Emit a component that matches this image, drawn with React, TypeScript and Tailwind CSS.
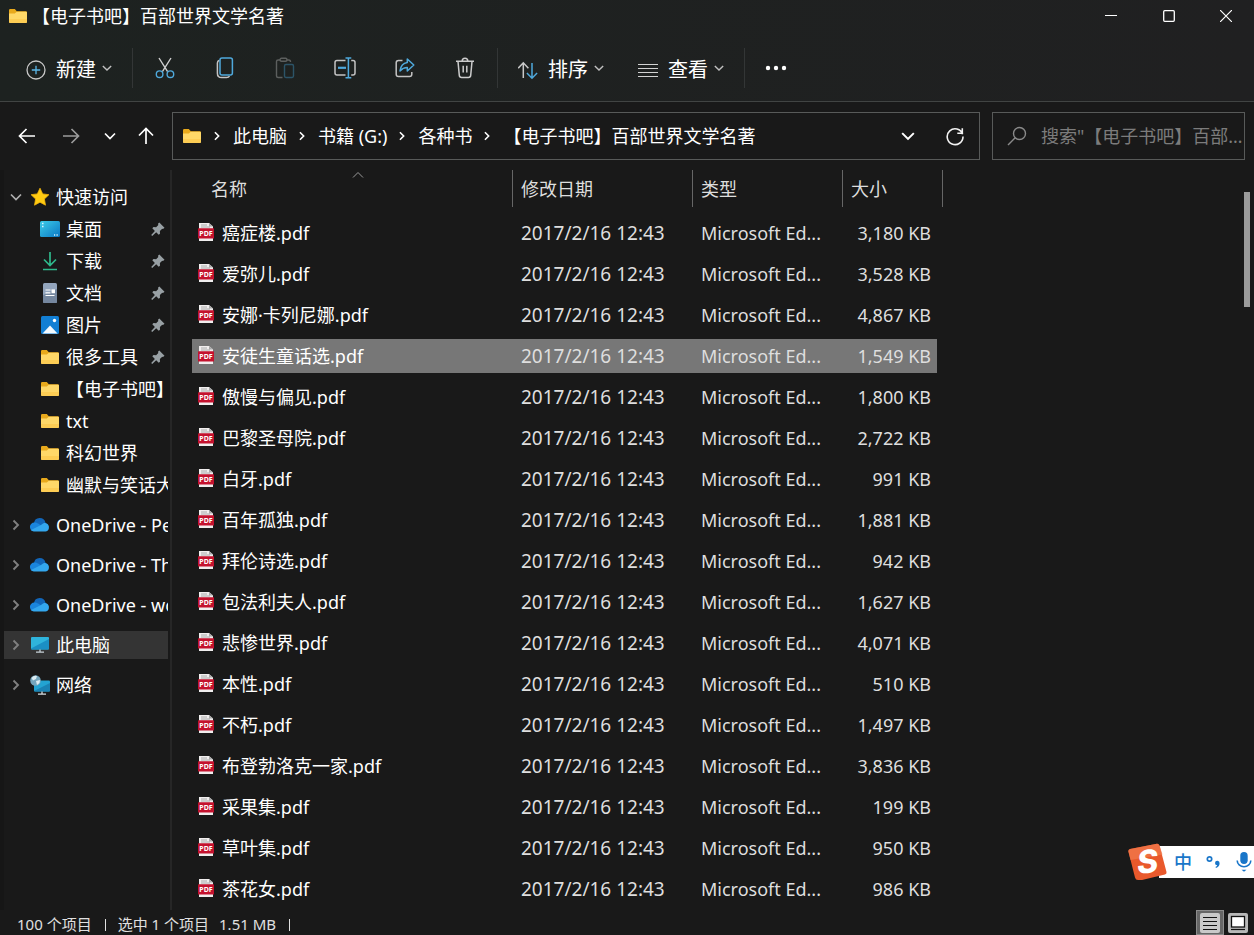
import type { ComponentType, ReactNode } from 'react';

type IconProps = { className?: string };

interface Book {
  name: string;
  size: string;
}

const MODIFIED = '2017/2/16 12:43';
const FILE_TYPE = 'Microsoft Ed...';

const books: Book[] = [
  { name: '癌症楼.pdf', size: '3,180 KB' },
  { name: '爱弥儿.pdf', size: '3,528 KB' },
  { name: '安娜·卡列尼娜.pdf', size: '4,867 KB' },
  { name: '安徒生童话选.pdf', size: '1,549 KB' },
  { name: '傲慢与偏见.pdf', size: '1,800 KB' },
  { name: '巴黎圣母院.pdf', size: '2,722 KB' },
  { name: '白牙.pdf', size: '991 KB' },
  { name: '百年孤独.pdf', size: '1,881 KB' },
  { name: '拜伦诗选.pdf', size: '942 KB' },
  { name: '包法利夫人.pdf', size: '1,627 KB' },
  { name: '悲惨世界.pdf', size: '4,071 KB' },
  { name: '本性.pdf', size: '510 KB' },
  { name: '不朽.pdf', size: '1,497 KB' },
  { name: '布登勃洛克一家.pdf', size: '3,836 KB' },
  { name: '采果集.pdf', size: '199 KB' },
  { name: '草叶集.pdf', size: '950 KB' },
  { name: '茶花女.pdf', size: '986 KB' },
];

/* ---------- icons ---------- */

function FolderIcon({ className = 'h-5 w-5' }: IconProps) {
  return (
    <svg viewBox="0 0 20 20" className={className} aria-hidden="true">
      <path d="M1 4.2Q1 3 2.2 3h4.6l2 2.2h9Q19 5.2 19 6.4V10H1z" fill="#e8a91c" />
      <path d="M1 7.4h5.8l2-1.6h9.2q1 0 1 1V16q0 1-1 1H2q-1 0-1-1z" fill="#ffd868" />
      <path d="M1 13h18v3q0 1-1 1H2q-1 0-1-1z" fill="#fbc748" opacity=".6" />
    </svg>
  );
}

function ChevronIcon({ className = 'h-3 w-3' }: IconProps) {
  return (
    <svg viewBox="0 0 12 12" className={className} fill="none" stroke="currentColor" aria-hidden="true">
      <path d="M1 3.5l5 5 5-5" strokeWidth="1.7" />
    </svg>
  );
}

function ChevronRightIcon({ className = 'h-3 w-2' }: IconProps) {
  return (
    <svg viewBox="0 0 8 12" className={className} fill="none" stroke="currentColor" aria-hidden="true">
      <path d="M1.5 1.5L6 6l-4.5 4.500" strokeWidth="1.900" />
    </svg>
  );
}

function NewIcon() {
  return (
    <svg viewBox="0 0 20 20" className="h-5 w-5" fill="none" aria-hidden="true">
      <circle cx="10" cy="10" r="9" stroke="#c8c8c8" strokeWidth="1.3" />
      <path d="M10 5.8v8.4M5.8 10h8.4" stroke="#5cb8e8" strokeWidth="1.3" />
    </svg>
  );
}

function CutIcon() {
  return (
    <svg viewBox="0 0 22 22" className="h-[22px] w-[22px]" fill="none" strokeWidth="1.4" aria-hidden="true">
      <path d="M5 1l8.6 13.6M17 1L8.4 14.6" stroke="#cfcfcf" />
      <circle cx="5.6" cy="17.2" r="3.3" stroke="#4fa9dc" />
      <circle cx="16.4" cy="17.2" r="3.3" stroke="#4fa9dc" />
    </svg>
  );
}

function CopyIcon() {
  return (
    <svg viewBox="0 0 22 22" className="h-[22px] w-[22px]" fill="none" strokeWidth="1.5" aria-hidden="true">
      <path d="M5.5 3.2C4 3.6 3.4 4.4 3.4 6v10.2c0 3 1.4 4.4 4.2 4.4h5c1.4 0 2.3-.4 2.9-1.4" stroke="#c4c4c4" />
      <rect x="6" y="1" width="12.4" height="17" rx="2" stroke="#4fa9dc" />
    </svg>
  );
}

function PasteIcon() {
  return (
    <svg viewBox="0 0 22 22" className="h-[22px] w-[22px]" fill="none" strokeWidth="1.4" aria-hidden="true">
      <path d="M8.5 20.5H4.2Q2.5 20.5 2.5 19V4.5Q2.5 3 4.2 3H6M12.5 3h2.3Q16.5 3 16.5 5" stroke="#5c5f5e" />
      <rect x="6" y="1.2" width="7" height="3" rx="1.5" stroke="#5c5f5e" />
      <rect x="10.5" y="7.5" width="9" height="13" rx="1.4" stroke="#2c5468" />
    </svg>
  );
}

function RenameIcon() {
  return (
    <svg viewBox="0 0 22 22" className="h-[22px] w-[22px]" fill="none" strokeWidth="1.5" aria-hidden="true">
      <path d="M11.5 3.5H3Q1 3.5 1 5.5v10.5q0 2 2 2h8.5M17.200 3.5H19q2 0 2 2v10.5q0 2-2 2h-1.8" stroke="#c4c4c4" />
      <path d="M11.5 1h5.8M11.5 20.8h5.8M14.4 1v19.8" stroke="#4fa9dc" />
      <path d="M4 10.8h8" stroke="#4fa9dc" strokeWidth="2.200" />
    </svg>
  );
}

function ShareIcon() {
  return (
    <svg viewBox="0 0 22 22" className="h-[22px] w-[22px]" fill="none" strokeWidth="1.5" aria-hidden="true">
      <path d="M8.5 3.5H4.5q-2.3 0-2.3 2.3v11.4q0 2.3 2.3 2.3h11q2.3 0 2.3-2.3v-2.2" stroke="#c4c4c4" />
      <path d="M13.3 2l6.500 6-6.500 6v-3.400c-3.300 0-5.200 1-7.300 3.300.6-4.400 2.900-7.600 7.300-8.300z" stroke="#4fa9dc" strokeLinejoin="round" />
    </svg>
  );
}

function TrashIcon() {
  return (
    <svg viewBox="0 0 22 22" className="h-[22px] w-[22px]" fill="none" stroke="#cccccc" strokeWidth="1.5" aria-hidden="true">
      <path d="M2 4.2h18M8.2 4q0-2.8 2.8-2.8T13.8 4M4 4.500l1.300 13.900q.2 2.100 2.300 2.100h6.800q2.100 0 2.300-2.100L18 4.500M9.200 8.800v6.800M12.800 8.800v6.800" />
    </svg>
  );
}

function SortIcon() {
  return (
    <svg viewBox="1 0 20 20" className="h-5 w-5" fill="none" strokeWidth="1.5" aria-hidden="true">
      <path d="M6.300 18V3M1.200 8.200l5.100-5.400 5.100 5.400" stroke="#c8c8c8" />
      <path d="M15 3v15M9.900 13l5.100 5.200 5.100-5.200" stroke="#4fa9dc" />
    </svg>
  );
}

function ViewIcon() {
  return (
    <svg viewBox="0 0 20 20" className="h-5 w-5" stroke="#d2d2d2" strokeWidth="1.2" aria-hidden="true">
      <path d="M0 4.500h20M0 8.500h20M0 12.500h20M0 16.500h20" />
    </svg>
  );
}

function MoreIcon() {
  return (
    <svg viewBox="0 0 22 6" className="h-1.5 w-[22px]" fill="#ffffff" aria-hidden="true">
      <circle cx="3" cy="3" r="2.200" />
      <circle cx="11" cy="3" r="2.200" />
      <circle cx="19" cy="3" r="2.200" />
    </svg>
  );
}

function ArrowIcon({ className = '' }: IconProps) {
  return (
    <svg viewBox="0 0 18 18" className={`h-[18px] w-[18px] ${className}`} fill="none" stroke="currentColor" strokeWidth="1.7" aria-hidden="true">
      <path d="M17 9H1.500M8.500 2L1.500 9l7 7" />
    </svg>
  );
}

function RefreshIcon() {
  return (
    <svg viewBox="0 0 20 20" className="h-5 w-5" fill="none" stroke="#f2f2f2" strokeWidth="1.6" aria-hidden="true">
      <path d="M17.600 8.200A7.900 7.900 0 1 0 18 10.500M17.300 2.200v5h-5" />
    </svg>
  );
}

function SearchIcon() {
  return (
    <svg viewBox="0 0 20 20" className="h-5 w-5 shrink-0" fill="none" stroke="#8a8a8a" strokeWidth="1.4" aria-hidden="true">
      <circle cx="12.5" cy="7.5" r="6" />
      <path d="M8.2 11.800L1 19" />
    </svg>
  );
}

function StarIcon() {
  return (
    <svg viewBox="0 0 20 20" className="h-5 w-5" aria-hidden="true">
      <path d="M10 1.200l2.700 5.700 6.200.8-4.500 4.300 1.100 6.200L10 15.200l-5.500 3 1.100-6.200L1.100 7.700l6.200-.8z" fill="#ffcb12" stroke="#f5b50a" strokeWidth=".8" strokeLinejoin="round" />
    </svg>
  );
}

function DesktopIcon() {
  return (
    <svg viewBox="0 0 20 20" className="h-5 w-5" aria-hidden="true">
      <defs>
        <linearGradient id="desk" x1="0" y1="0" x2="1" y2="1">
          <stop offset="0" stopColor="#3ccbe8" />
          <stop offset="1" stopColor="#0b78c4" />
        </linearGradient>
      </defs>
      <rect x="0" y="2" width="20" height="16" rx="1.5" fill="url(#desk)" />
      <path d="M2 4.500h1.500M2 7.500h1.500M14 16h1.200M16.500 16h1.200" stroke="#d8f4ff" strokeWidth="1.3" />
    </svg>
  );
}

function DownloadIcon() {
  return (
    <svg viewBox="0 0 20 20" className="h-5 w-5" fill="none" stroke="#2fb98c" strokeWidth="1.7" aria-hidden="true">
      <path d="M10 1v13M4 8.500l6 6 6-6M3 18.500h14" />
    </svg>
  );
}

function DocumentIcon() {
  return (
    <svg viewBox="0 0 20 20" className="h-5 w-5" aria-hidden="true">
      <rect x="3" y="0" width="14" height="20" rx="1.5" fill="#93a5bd" />
      <path d="M3 12l14-6v12.500q0 1.500-1.500 1.500h-11Q3 20 3 18.500z" fill="#75879f" />
      <path d="M5.500 7h5M5.500 9.800h5M5.500 12.500h9" stroke="#fff" strokeWidth="1.2" />
      <rect x="11.5" y="6.400" width="3.500" height="3.800" fill="#fff" />
    </svg>
  );
}

function PictureIcon() {
  return (
    <svg viewBox="0 0 20 20" className="h-5 w-5" aria-hidden="true">
      <rect x="1" y="1" width="18" height="18" rx="1.5" fill="#127fd4" />
      <path d="M2.500 18.500L10 10.500l7.500 8z" fill="#f4faff" />
      <circle cx="14.5" cy="5.500" r="1.700" fill="#fff" />
    </svg>
  );
}

function CloudIcon() {
  return (
    <svg viewBox="0 0 20 20" className="h-5 w-5" aria-hidden="true">
      <path d="M4 8A5.800 5.800 0 0 1 15.400 7.500L19 12l-8 3H4.500A4 4 0 0 1 4 8z" fill="#1266b8" />
      <path d="M0 12.500A4.500 4.500 0 0 1 4.600 7.400c1.400 0 2.500.5 3.600 1.200l7 5-5 2.500H4.300Q.5 16.500 0 12.500z" fill="#1a85dc" />
      <path d="M1 15l10-5c1.300-1.500 2.700-2.100 4.100-2.100a4.400 4.400 0 0 1 .6 8.600H4.300Q2 16.300 1 15z" fill="#33a7ee" />
    </svg>
  );
}

function ComputerIcon() {
  return (
    <svg viewBox="0 0 20 20" className="h-5 w-5" aria-hidden="true">
      <rect x="1" y="2" width="18" height="12.500" rx="1" fill="#2fb4dc" />
      <path d="M1 13.500L19 4v9.500q0 1-1 1H2q-1 0-1-1z" fill="#1b8fc4" />
      <path d="M10 14.500V17M6 17.200h8" stroke="#c5d0d6" strokeWidth="1.3" />
    </svg>
  );
}

function NetworkIcon() {
  return (
    <svg viewBox="0 0 20 20" className="h-5 w-5" aria-hidden="true">
      <rect x="4" y="5.500" width="16" height="11" rx="1" fill="#23a3d2" />
      <path d="M4 16L20 8v7.500q0 1-1 1H5z" fill="#1a82b4" />
      <path d="M12 16.500V19M8 19.200h8" stroke="#d5dde2" strokeWidth="1.3" />
      <circle cx="5.500" cy="5.500" r="5.300" fill="#74a5bd" />
      <path d="M1.500 3Q4 0 7 1l-1 3-3 1.500zM6 6l4-1-.5 3-2.500 2z" fill="#dcecf2" />
    </svg>
  );
}

function PinIcon() {
  return (
    <svg viewBox="0 0 14 14" className="h-3.5 w-3.5 shrink-0" fill="#98a0a4" aria-hidden="true">
      <path d="M8.300.5l5.200 5.200-1.500 1.200-.8-.2-2.300 2.300.1 2.700-1.300 1L5.200 10.200 1.200 14 .2 13l3.700-4L1.300 6.300l1.200-1.200 2.600.2L7.300 3l-.3-1.300z" />
    </svg>
  );
}

function PdfIcon() {
  return (
    <svg viewBox="0 0 16 20" className="h-5 w-4 shrink-0" aria-hidden="true">
      <path d="M1 0h10l4 3.500V18H1z" fill="#f1eeee" />
      <path d="M11 0v3.500h4z" fill="#a9a9a9" />
      <path d="M3 2h6M3 4h9" stroke="#9a9a9a" strokeWidth=".8" />
      <rect x="0" y="5.200" width="16" height="10.300" rx=".6" fill="#c4122e" />
      <text x="8" y="13" textAnchor="middle" fontSize="7" fontWeight="700" fontFamily="Noto Sans, sans-serif" fill="#fff">
        PDF
      </text>
    </svg>
  );
}

/* ---------- title bar and commands ---------- */

function TitleBar() {
  return (
    <header className="flex h-8 items-center pl-2">
      <FolderIcon />
      <h1 className="grow pl-1 text-lg leading-8">【电子书吧】百部世界文学名著</h1>
      <button aria-label="最小化" className="flex h-8 w-[58px] items-center justify-center">
        <svg viewBox="0 0 12 12" className="h-3 w-3" stroke="#fff"><path d="M0 5.500h12" /></svg>
      </button>
      <button aria-label="最大化" className="flex h-8 w-[58px] items-center justify-center">
        <svg viewBox="0 0 12 12" className="h-3 w-3" fill="none" stroke="#fff" strokeWidth="1.3"><rect x=".7" y=".7" width="10.600" height="10.600" rx="1" /></svg>
      </button>
      <button aria-label="关闭" className="flex h-8 w-14 items-center justify-center">
        <svg viewBox="0 0 12 12" className="h-3 w-3" stroke="#fff" strokeWidth="1.2"><path d="M0 0l12 12M12 0L0 12" /></svg>
      </button>
    </header>
  );
}

function MenuButton({ icon, label }: { icon: ReactNode; label: string }) {
  return (
    <button className="flex h-10 items-center gap-1.5 text-xl">
      <span className="flex items-center gap-2.5 pt-1">
        {icon}
        <span>{label}</span>
      </span>
      <ChevronIcon className="h-2.5 w-2.5 text-[#c0c0c0]" />
    </button>
  );
}

function Separator() {
  return <div className="h-10 w-px bg-[#333636]" />;
}

const commands: { label: string; Icon: ComponentType }[] = [
  { label: '剪切', Icon: CutIcon },
  { label: '复制', Icon: CopyIcon },
  { label: '粘贴', Icon: PasteIcon },
  { label: '重命名', Icon: RenameIcon },
  { label: '共享', Icon: ShareIcon },
  { label: '删除', Icon: TrashIcon },
];

function CommandBar() {
  return (
    <div role="toolbar" className="flex h-[70px] items-center border-b border-[#414443] pt-[3px]">
      <div className="flex pr-5 pl-[26px]">
        <MenuButton icon={<NewIcon />} label="新建" />
      </div>
      <Separator />
      <div className="flex px-0.5">
        {commands.map(({ label, Icon }) => (
          <button key={label} aria-label={label} className="flex h-10 w-[60px] items-center justify-center">
            <Icon />
          </button>
        ))}
      </div>
      <Separator />
      <div className="flex gap-[34px] px-5">
        <MenuButton icon={<SortIcon />} label="排序" />
        <MenuButton icon={<ViewIcon />} label="查看" />
      </div>
      <Separator />
      <button aria-label="更多" className="flex h-10 items-center px-5">
        <MoreIcon />
      </button>
    </div>
  );
}

/* ---------- address bar ---------- */

const crumbs = ['此电脑', '书籍 (G:)', '各种书', '【电子书吧】百部世界文学名著'];

function AddressBar() {
  return (
    <div className="flex items-center gap-3 pt-2.5 pr-[9px] pb-2.5 pl-[18px]">
      <nav className="flex w-[142px] items-center">
        <button aria-label="后退" className="w-11"><ArrowIcon /></button>
        <button aria-label="前进" className="w-[42px] text-[#9c9c9c]"><ArrowIcon className="rotate-180" /></button>
        <button aria-label="最近位置" className="w-[33px]"><ChevronIcon /></button>
        <button aria-label="上移"><ArrowIcon className="rotate-90" /></button>
      </nav>
      <div className="flex h-12 min-w-0 grow items-center border border-[#585a59] pr-3.5 pl-[9px]">
        <FolderIcon className="h-5 w-5 shrink-0" />
        <ol className="flex grow items-center text-lg">
          {crumbs.map((crumb) => (
            <li key={crumb} className="flex items-center whitespace-nowrap">
              <ChevronRightIcon className="mr-3 ml-[11px] h-2.5 w-2" />
              <a href="#">{crumb}</a>
            </li>
          ))}
        </ol>
        <button aria-label="展开地址" className="mr-[30px]"><ChevronIcon className="h-3.5 w-3.5" /></button>
        <button aria-label="刷新"><RefreshIcon /></button>
      </div>
      <label className="flex h-12 w-[253px] items-center gap-3.5 border border-[#585a59] pl-3.5">
        <SearchIcon />
        <input
          type="text"
          aria-label="搜索"
          placeholder={'搜索"【电子书吧】百部世界文学名著"'}
          className="w-full min-w-0 bg-transparent text-lg text-ellipsis outline-none placeholder:text-[#7c7c7c]"
        />
      </label>
    </div>
  );
}

/* ---------- navigation pane ---------- */

const quickAccess: { label: string; Icon: ComponentType; pinned?: boolean }[] = [
  { label: '桌面', Icon: DesktopIcon, pinned: true },
  { label: '下载', Icon: DownloadIcon, pinned: true },
  { label: '文档', Icon: DocumentIcon, pinned: true },
  { label: '图片', Icon: PictureIcon, pinned: true },
  { label: '很多工具', Icon: FolderIcon, pinned: true },
  { label: '【电子书吧】', Icon: FolderIcon },
  { label: 'txt', Icon: FolderIcon },
  { label: '科幻世界', Icon: FolderIcon },
  { label: '幽默与笑话大', Icon: FolderIcon },
];

const roots: { label: string; Icon: ComponentType; active?: boolean }[] = [
  { label: 'OneDrive - Personal', Icon: CloudIcon },
  { label: 'OneDrive - The', Icon: CloudIcon },
  { label: 'OneDrive - work', Icon: CloudIcon },
  { label: '此电脑', Icon: ComputerIcon, active: true },
  { label: '网络', Icon: NetworkIcon },
];

function Sidebar() {
  return (
    <aside className="w-[172px] shrink-0 overflow-hidden border-r-2 border-l-4 border-r-[#262626] border-l-[#161616] pt-[11px] pr-0.5 text-lg whitespace-nowrap">
      <a href="#" className="flex h-8 items-center pl-1.5">
        <ChevronIcon className="mr-2 h-3 w-3 text-[#b0b0b0]" />
        <StarIcon />
        <span className="pl-1.5">快速访问</span>
      </a>
      <ul>
        {quickAccess.map(({ label, Icon, pinned }) => (
          <li key={label}>
            <a href="#" className="flex h-8 items-center pl-9">
              <span className="shrink-0"><Icon /></span>
              <span className="grow overflow-hidden pl-1.5">{label}</span>
              {pinned && <span className="pr-[3px]"><PinIcon /></span>}
            </a>
          </li>
        ))}
      </ul>
      <ul className="pt-1">
        {roots.map(({ label, Icon, active }) => (
          <li key={label} className="flex h-10 items-center">
            <a href="#" className={`flex h-7 w-full items-center pl-2 ${active ? 'bg-[#343434]' : ''}`}>
              <ChevronRightIcon className="mr-2.5 h-3 w-2 shrink-0 text-[#808080]" />
              <span className="shrink-0"><Icon /></span>
              <span className="overflow-hidden pl-1.5">{label}</span>
            </a>
          </li>
        ))}
      </ul>
    </aside>
  );
}

/* ---------- file list ---------- */

function FileRow({ book, selected }: { book: Book; selected: boolean }) {
  const bg = selected ? 'bg-[#777777]' : '';
  return (
    <tr className="h-[41px]">
      <td className="p-0">
        <div className={`flex h-[34px] items-center gap-2 pl-1.5 text-white ${bg}`}>
          <PdfIcon />
          <span>{book.name}</span>
        </div>
      </td>
      <td className="p-0">
        <div className={`flex h-[34px] items-center pl-[9px] text-[19px] leading-7 ${bg}`}>{MODIFIED}</div>
      </td>
      <td className="p-0">
        <div className={`flex h-[34px] items-center pl-[9px] ${bg}`}>{FILE_TYPE}</div>
      </td>
      <td className="p-0 pr-1.5">
        <div className={`flex h-[34px] items-center justify-end pr-1.5 ${bg}`}>{book.size}</div>
      </td>
    </tr>
  );
}

function FileList() {
  return (
    <main className="flex min-w-0 grow justify-between overflow-hidden pr-1 pl-5">
      <table className="w-[751px] shrink-0 table-fixed border-collapse self-start text-left text-lg whitespace-nowrap text-[#dedede]">
        <colgroup>
          <col className="w-[320px]" />
          <col className="w-[180px]" />
          <col className="w-[150px]" />
          <col className="w-[101px]" />
        </colgroup>
        <thead>
          <tr className="h-[42px] align-top">
            <th className="relative p-0 font-normal">
              <svg viewBox="0 0 12 6" className="absolute top-0.5 left-[160px] h-1.5 w-3" fill="none" stroke="#9a9a9a">
                <path d="M1 5.500l5-5 5 5" />
              </svg>
              <button className="flex h-[37px] items-center pl-[19px]">名称</button>
            </th>
            <th className="p-0 font-normal">
              <button className="flex h-[37px] w-full items-center border-l border-[#666666] pl-2">修改日期</button>
            </th>
            <th className="p-0 font-normal">
              <button className="flex h-[37px] w-full items-center border-l border-[#666666] pl-2">类型</button>
            </th>
            <th className="p-0 font-normal">
              <button className="flex h-[37px] w-full items-center border-x border-[#666666] pl-2">大小</button>
            </th>
          </tr>
        </thead>
        <tbody>
          {books.map((book, index) => (
            <FileRow key={book.name} book={book} selected={index === 3} />
          ))}
        </tbody>
      </table>
      <div className="pt-[22px]">
        <div className="h-[115px] w-1.5 bg-[#9b9b9b]" />
      </div>
    </main>
  );
}

function StatusBar() {
  return (
    <footer className="flex h-[25px] shrink-0 items-center pr-1.5 pl-[17px] text-[15px] text-[#e0e0e0]">
      <span className="pt-1">100 个项目</span>
      <div className="mt-1 mr-3 ml-[13px] h-3 w-px bg-[#e0e0e0]" />
      <span className="pt-1">选中 1 个项目</span>
      <span className="pt-1 pl-2.5">1.51 MB</span>
      <div className="mt-1 ml-[13px] h-3 w-px bg-[#e0e0e0]" />
      <div className="ml-auto flex gap-1 self-end">
        <button aria-label="详细信息" className="flex h-[25px] w-7 items-center justify-center border border-[#8c8c8c] bg-[#666666]">
          <svg viewBox="0 0 20 20" className="h-5 w-5">
            <rect width="20" height="20" rx="2" fill="#c9c9c9" />
            <path d="M3 4.500h14M3 8.500h14M3 12.500h14M3 16.500h14" stroke="#111" />
          </svg>
        </button>
        <button aria-label="大图标" className="flex h-[25px] items-center">
          <svg viewBox="0 0 20 20" className="h-5 w-5">
            <rect width="20" height="20" rx="2" fill="#b8b8b8" />
            <rect x="3.500" y="3.500" width="13" height="10.500" fill="#fff" stroke="#111" strokeWidth="1.3" />
            <path d="M3 16.500h14" stroke="#111" strokeWidth="1.2" />
          </svg>
        </button>
      </div>
    </footer>
  );
}

/* Floating input method bar */
function ImeBar() {
  return (
    <div className="absolute right-0 bottom-[57px] flex h-8 items-center text-[#1976c9]">
      <svg viewBox="0 0 40 38" className="relative h-[38px] w-10" aria-hidden="true">
        <path d="M3 6Q1 6.500 1.400 8.500L8 34.500Q8.600 37 11 37h4L38 31.500Q40 30.800 39.500 29L32.500 2.500Q31.800.5 29.800.8z" fill="#e9592c" />
        <path d="M3 6Q1 6.500 1.400 8.500L3.500 17 35.500 11.500 32.500 2.500Q31.800.5 29.800.8z" fill="#f17a4d" opacity=".7" />
        <text x="20.500" y="30" textAnchor="middle" fontSize="32" fontWeight="800" fontFamily="Inter, sans-serif" fill="#fff" transform="rotate(-4 20 19) skewX(-8) translate(3 0)">
          S
        </text>
      </svg>
      <div className="-ml-2 flex h-8 items-center bg-white pr-0.5 pl-[15px]">
        <span className="text-lg font-medium">中</span>
        <svg viewBox="0 0 16 14" className="ml-3.5 h-3.5 w-4" aria-hidden="true">
          <circle cx="3.500" cy="4" r="2.200" fill="none" stroke="currentColor" strokeWidth="1.7" />
          <path d="M9 8a2.300 2.300 0 1 1 4.600.3c0 2.500-1.400 4-3.600 4.700l-.5-1.100c1-.4 1.500-1 1.700-1.700A2.200 2.200 0 0 1 9 8z" fill="currentColor" />
        </svg>
        <svg viewBox="0 0 16 20" className="ml-3.5 h-5 w-4" aria-hidden="true">
          <rect x="4.300" y="0" width="7.400" height="12" rx="3.700" fill="currentColor" />
          <path d="M1.200 8.500a6.800 6.200 0 0 0 13.600 0" fill="none" stroke="currentColor" strokeWidth="1.6" />
          <path d="M5.500 17.800h5L8 19.800z" fill="currentColor" />
        </svg>
      </div>
    </div>
  );
}

export default function App() {
  return (
    <div className="relative flex h-screen flex-col overflow-hidden bg-[#191919] font-['Noto_Sans','Noto_Sans_CJK_SC',sans-serif] text-white">
      <div className="bg-linear-to-r from-[#1d2220] to-[#202021]">
        <TitleBar />
        <CommandBar />
      </div>
      <AddressBar />
      <div className="flex min-h-0 grow">
        <Sidebar />
        <FileList />
      </div>
      <StatusBar />
      <ImeBar />
    </div>
  );
}
